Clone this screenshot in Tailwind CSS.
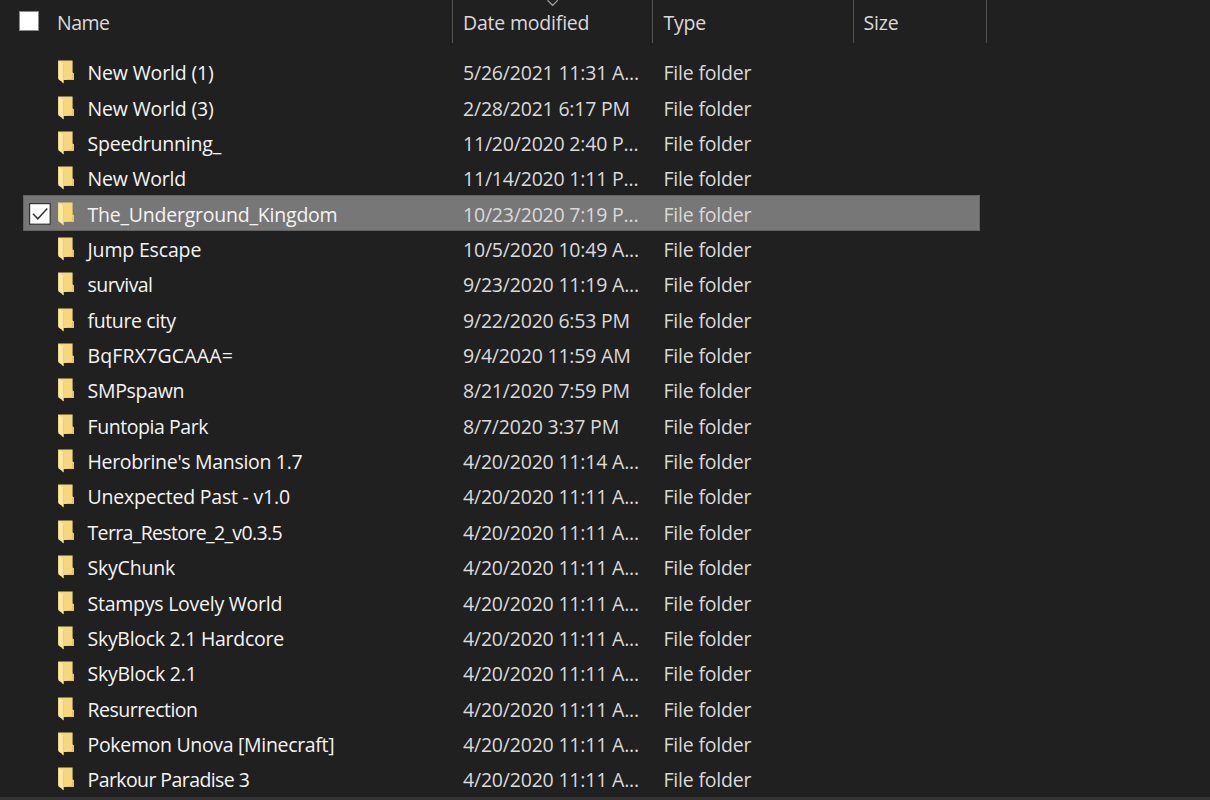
<!DOCTYPE html>
<html lang="en">
<head>
    <meta charset="UTF-8">
    <meta name="viewport" content="width=device-width, initial-scale=1.0">
    <title>File Explorer</title>
    <script src="https://cdn.jsdelivr.net/npm/@tailwindcss/browser@4"></script>
</head>
<body class="h-screen overflow-hidden bg-[#202020] font-['Open_Sans','Noto_Sans',sans-serif] text-[19.5px] text-[#dadada]">
    <div class="flex h-[800px] flex-col">
        <!-- Column headers -->
        <header class="relative flex h-[43px] shrink-0 leading-[45px] tracking-[-0.2px]">
            <div class="flex w-[453px] border-r border-[#535353] pl-[19px]">
                <span class="mt-[11px] mr-[18px] size-5 border border-[#8a8a8a] bg-white"></span>
                <span class="tracking-[-0.5px]">Name</span>
            </div>
            <div class="w-[200px] border-r border-[#535353] pl-2.5">Date modified</div>
            <div class="w-[201px] border-r border-[#535353] pl-[10.5px]">Type</div>
            <div class="w-[133px] border-r border-[#535353] pl-[9.5px]">Size</div>
            <svg class="absolute top-0 left-[546px]" width="13" height="7" viewBox="0 0 13 7" fill="none" stroke="#a0a0a0" stroke-width="1.2">
                <path d="M1.5 0.3 6.6 5.3 11.7 0.3"/>
            </svg>
        </header>

        <!-- File rows -->
        <main id="fileList" class="h-[754px] shrink-0 overflow-hidden pt-[10.8px] pl-[23px]"></main>

        <div class="h-[3px] shrink-0 bg-[#343233]"></div>
    </div>

    <template id="folderIcon">
        <svg class="mt-[6px] ml-[7px] shrink-0" width="18" height="24" viewBox="0 0 18 24">
            <path d="M1.3 0.6H15.6V12.6L17 13.4V20H5L1.3 18Z" fill="#f6d779"/>
            <path d="M15.6 12.4 17 13.4V20H10V19H14.6Z" fill="#eac363"/>
            <path d="M1.3 0.6 6.5 3.8V23L1.3 19.3Z" fill="#ffe8a2"/>
            <path d="M6.4 3.8V23L5 22" fill="none" stroke="#e9c56b" stroke-width="0.7"/>
        </svg>
    </template>

    <script>
        // name, date modified, letter spacing of the name
        const folders = [
            ['New World (1)', '5/26/2021 11:31 A...', -0.15],
            ['New World (3)', '2/28/2021 6:17 PM', -0.15],
            ['Speedrunning_', '11/20/2020 2:40 P...', -0.22],
            ['New World', '11/14/2020 1:11 P...', -0.2],
            ['The_Underground_Kingdom', '10/23/2020 7:19 P...', -0.22],
            ['Jump Escape', '10/5/2020 10:49 A...', -0.16],
            ['survival', '9/23/2020 11:19 A...', -0.55],
            ['future city', '9/22/2020 6:53 PM', -0.38],
            ['BqFRX7GCAAA=', '9/4/2020 11:59 AM', 0.15],
            ['SMPspawn', '8/21/2020 7:59 PM', -0.3],
            ['Funtopia Park', '8/7/2020 3:37 PM', -0.43],
            ["Herobrine's Mansion 1.7", '4/20/2020 11:14 A...', -0.32],
            ['Unexpected Past - v1.0', '4/20/2020 11:11 A...', -0.2],
            ['Terra_Restore_2_v0.3.5', '4/20/2020 11:11 A...', -0.64],
            ['SkyChunk', '4/20/2020 11:11 A...', -0.2],
            ['Stampys Lovely World', '4/20/2020 11:11 A...', -0.24],
            ['SkyBlock 2.1 Hardcore', '4/20/2020 11:11 A...', -0.28],
            ['SkyBlock 2.1', '4/20/2020 11:11 A...', -0.25],
            ['Resurrection', '4/20/2020 11:11 A...', -0.5],
            ['Pokemon Unova [Minecraft]', '4/20/2020 11:11 A...', -0.32],
            ['Parkour Paradise 3', '4/20/2020 11:11 A...', -0.58],
        ];
        const selected = 4;
        const icon = document.getElementById('folderIcon').innerHTML;
        const check = `
            <svg class="mt-[7px] ml-[6px]" width="22" height="22" viewBox="0 0 22 22" fill="none" stroke="#333">
                <rect x="0.6" y="0.6" width="20.6" height="20.6" fill="#fff" stroke-width="1.2"/>
                <path d="M4 10.8 8.8 15.8 18.3 5.6" stroke-width="1.5"/>
            </svg>`;

        document.getElementById('fileList').innerHTML = folders.map(([name, date, spacing], i) => `
            <div class="flex h-[35.37px] w-[957px] pt-[0.35px] whitespace-nowrap leading-[38px] ${i === selected ? 'bg-[#777777] outline-1 -outline-offset-1 outline-[#636363]' : ''}">
                <div class="w-[27px] shrink-0">${i === selected ? check : ''}</div>
                ${icon}
                <div class="ml-[12.5px] w-[375.5px] shrink-0 text-[#f4f4f4]" style="letter-spacing: ${spacing}px">${name}</div>
                <div class="w-[200.5px] shrink-0 tracking-[-0.2px]">${date}</div>
                <div class="tracking-[-0.2px]">File folder</div>
            </div>`).join('');
    </script>
</body>
</html>
